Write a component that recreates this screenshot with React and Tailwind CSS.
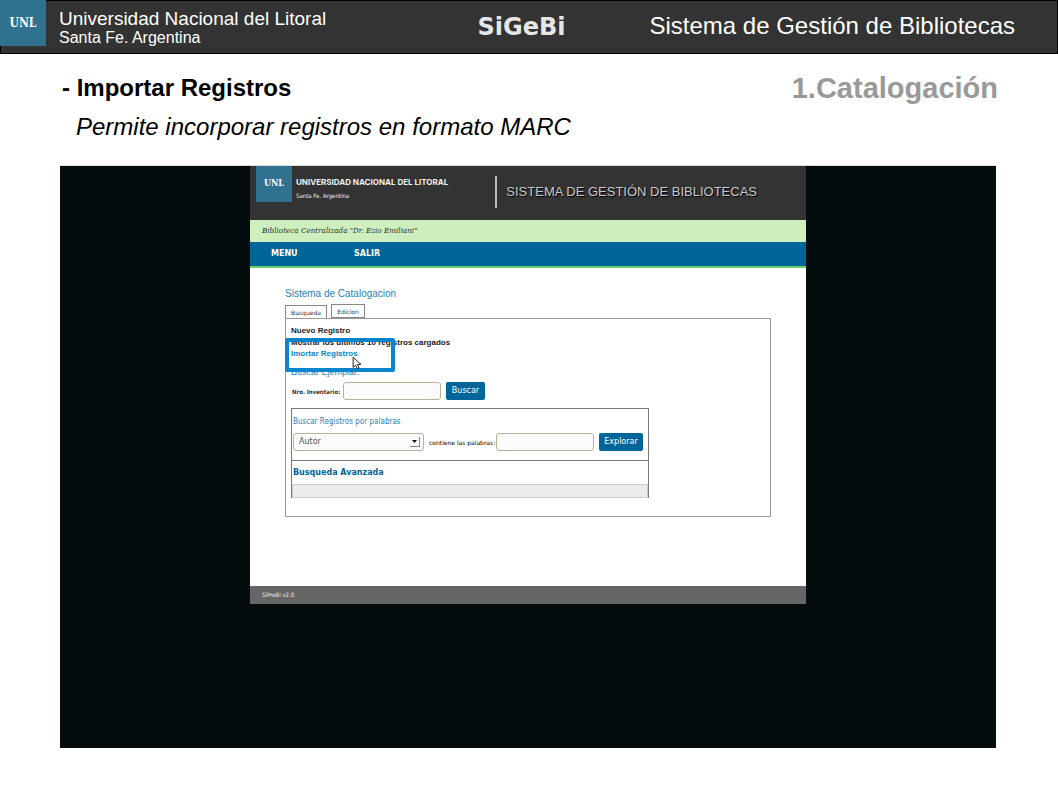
import React from 'react';

const Logo = ({ className }) => (
  <div
    className={`flex shrink-0 items-center justify-center bg-[#30718f] font-['DejaVu_Serif_Condensed','DejaVu_Serif',serif] font-bold text-white ${className}`}
  >
    UNL
  </div>
);

const Cursor = () => (
  <svg className="absolute left-[63px] top-[14px] h-[14px] w-[10px]" viewBox="0 0 9 12" aria-hidden="true">
    <path
      d="M1 0.8 L1 10 L3.2 8 L4.8 11.3 L6.4 10.6 L4.9 7.4 L8 7.2 Z"
      fill="#fff"
      stroke="#222"
      strokeWidth="0.9"
      strokeLinejoin="round"
    />
  </svg>
);

const SlideHeader = () => (
  <header className="flex h-[54px] items-start border border-black bg-[#333333] text-white">
    <div className="flex flex-1 items-start">
      <Logo className="-ml-px -mt-px h-[46px] w-[46px] text-[12px]" />
      <div className="ml-[13px] mt-2 whitespace-nowrap">
        <p className="text-[19px] leading-5">Universidad Nacional del Litoral</p>
        <p className="text-[16px] leading-[18px]">Santa Fe. Argentina</p>
      </div>
    </div>
    <p className="mr-[84px] mt-3 font-['DejaVu_Sans',sans-serif] text-[24px] font-bold leading-7 text-[#e6e6e6]">
      SiGeBi
    </p>
    <p className="mr-[42px] mt-[11px] whitespace-nowrap text-[24px] leading-7">
      Sistema de Gestión de Bibliotecas
    </p>
  </header>
);

const AppHeader = () => (
  <>
    <div className="flex h-[54px] items-start bg-[#333333] pl-[6px] text-[#f0f0f0]">
      <Logo className="h-9 w-9 text-[9px]" />
      <div className="ml-1 mt-[9px] flex-1 whitespace-nowrap">
        <p className="font-['Inter',sans-serif] text-[8px] font-bold leading-[14px]">
          UNIVERSIDAD NACIONAL DEL LITORAL
        </p>
        <p className="font-['DejaVu_Sans_Condensed','DejaVu_Sans',sans-serif] text-[6px] leading-[14px]">
          Santa Fe. Argentina
        </p>
      </div>
      <div className="mr-[49px] mt-[10px] flex h-8 items-center whitespace-nowrap border-l-2 border-[#bdbdbd] pl-[9px] text-[13px] text-[#c8c8c8] [text-shadow:1px_1px_1px_#000]">
        SISTEMA DE GESTIÓN DE BIBLIOTECAS
      </div>
    </div>
    <p className="h-[22px] bg-[#cdeebd] pl-3 font-['DejaVu_Serif_Condensed','DejaVu_Serif',serif] text-[8px] italic leading-[22px] text-[#333333]">
      Biblioteca Centralizada "Dr. Ezio Emiliani"
    </p>
    <nav className="flex h-[26px] items-center border-b-2 border-[#6fc96f] bg-[#006699] font-['DejaVu_Sans',sans-serif] text-[8px] font-bold text-white">
      <a href="#menu" className="w-[98px] border-r border-[#0a6093] pl-[21px] leading-6">MENU</a>
      <a href="#salir" className="w-[84px] border-r border-[#0a6093] pl-[6px] leading-6">SALIR</a>
    </nav>
  </>
);

const fieldClass = 'h-[18px] w-[98px] rounded-[3px] border border-[#b5b39a] bg-[#fbfbfb] px-1 text-[8px]';
const buttonClass =
  "h-[18px] rounded-[2px] bg-[#006699] text-center font-['DejaVu_Sans',sans-serif] text-[8px] leading-[18px] text-white";

const SearchPanel = () => (
  <div className="relative -mt-px border border-[#999999] pb-[18px] pl-[5px] pt-[6px] text-[8px]">
    <ul className="font-bold leading-3 text-[#222222]">
      <li><a href="#nuevo">Nuevo Registro</a></li>
      <li><a href="#ultimos">Mostrar los ultimos 10 registros cargados</a></li>
      <li className="-mt-px"><a href="#importar" className="text-[#0a84cc]">Imortar Registros</a></li>
    </ul>
    <p className="mt-[6px] text-[9px] leading-3 text-[#2b7fb5]">Buscar Ejemplar:</p>
    <form className="mt-1 flex items-center">
      <label htmlFor="inventario" className="w-[52px] whitespace-nowrap pl-px font-['DejaVu_Sans_Condensed','DejaVu_Sans',sans-serif] text-[6px] font-bold text-[#333333]">
        Nro. Inventario:
      </label>
      <input id="inventario" type="text" className={fieldClass} />
      <button type="button" className={`${buttonClass} ml-[5px] w-[39px]`}>Buscar</button>
    </form>

    <div className="mt-2 max-w-[358px] border-x border-t border-[#777777]">
      <form className="h-[52px] border-b border-[#777777] pt-[7px]">
        <p className="pl-px font-['DejaVu_Sans_Condensed','DejaVu_Sans',sans-serif] text-[8px] leading-3 text-[#2b7fb5]">
          Buscar Registros por palabras
        </p>
        <div className="mt-[5px] flex items-center pl-px">
          <div className="relative">
            <select
              aria-label="Campo"
              className="block h-[18px] w-[131px] appearance-none rounded-[3px] border border-[#b5b39a] bg-[#fbfbfb] pl-[5px] font-['DejaVu_Sans',sans-serif] text-[8px] text-[#555555]"
            >
              <option>Autor</option>
            </select>
            <span className="pointer-events-none absolute right-1 top-1 flex h-[10px] w-[10px] items-center justify-center border-b border-r border-[#888888]">
              <svg className="h-[3px] w-[5px]" viewBox="0 0 5 3" aria-hidden="true">
                <path d="M0 0H5L2.5 3Z" fill="#111" />
              </svg>
            </span>
          </div>
          <label htmlFor="palabras" className="ml-[5px] w-[67px] whitespace-nowrap font-['DejaVu_Sans',sans-serif] text-[6px] text-black">
            contiene las palabras:
          </label>
          <input id="palabras" type="text" className={fieldClass} />
          <button type="button" className={`${buttonClass} ml-[5px] w-11`}>Explorar</button>
        </div>
      </form>
      <p className="h-[23px] pl-px font-['DejaVu_Sans',sans-serif] text-[8px] font-bold leading-6 text-[#006699]">
        Busqueda Avanzada
      </p>
      <div className="h-[14px] border border-[#cccccc] bg-[#ebebeb]" />
    </div>

    {/* Highlight over the import link */}
    <div className="pointer-events-none absolute -left-px top-[19px] h-[34px] w-[110px] rounded-[2px] border-4 border-[#0a84cc]">
      <Cursor />
    </div>
  </div>
);

const CatalogApp = () => (
  <div className="mx-auto max-w-[556px] bg-white">
    <AppHeader />
    <main className="px-[35px] pb-[69px] pt-5">
      <h3 className="text-[10px] leading-3 text-[#2b7fb5]">Sistema de Catalogacion</h3>
      <div className="mt-1 flex items-start gap-1 font-['DejaVu_Sans',sans-serif] text-[6px] text-[#333333]">
        <button type="button" className="mt-px h-[14px] w-[42px] border border-[#888888] bg-white">Busqueda</button>
        <button type="button" className="h-[14px] w-[34px] border border-[#888888] bg-white">Edicion</button>
      </div>
      <SearchPanel />
    </main>
    <footer className="h-[18px] bg-[#666666] pl-3 font-['DejaVu_Sans_Condensed','DejaVu_Sans',sans-serif] text-[6px] leading-[18px] text-[#eeeeee]">
      SiPreBi v2.0
    </footer>
  </div>
);

const App = () => (
  <div className="min-h-screen bg-white font-['Liberation_Sans',Arial,sans-serif] text-black">
    <SlideHeader />
    <section className="px-[60px] pb-[45px] pt-4">
      <div className="flex items-center justify-between">
        <h1 className="pl-[2px] text-[24px] font-bold leading-9">- Importar Registros</h1>
        <h2 className="text-[29px] font-bold leading-9 text-[#999999]">1.Catalogación</h2>
      </div>
      <p className="mt-[7px] pl-4 text-[24px] italic leading-7">
        Permite incorporar registros en formato MARC
      </p>
      <div className="mr-[2px] mt-6 border-t border-[#dddddd] bg-[#040c0d] pb-36">
        <CatalogApp />
      </div>
    </section>
  </div>
);

export default App;
